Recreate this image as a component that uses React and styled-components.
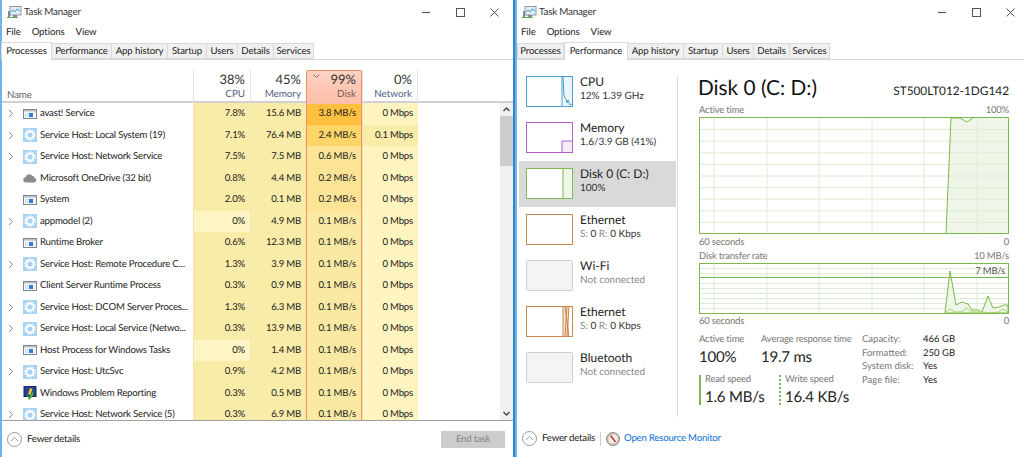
import React from 'react';
import styled, { createGlobalStyle } from 'styled-components';

const GlobalStyle = createGlobalStyle`
  html, body {
    margin: 0;
    padding: 0;
    background: #fff;
  }
  body {
    font-family: 'Lato', 'Noto Sans', sans-serif;
    font-size: 9.6px;
    letter-spacing: -0.2px;
    color: #222;
    overflow: hidden;
    text-rendering: geometricPrecision;
  }
  * {
    box-sizing: border-box;
  }
`;

const Desktop = styled.div`
  display: flex;
  width: 1024px;
  height: 457px;
  overflow: hidden;
`;

const Window = styled.div`
  display: flex;
  flex-direction: column;
  width: ${(p) => p.$width}px;
  height: 457px;
  flex: none;
  background: #fff;
  border-left: 2px solid #6fb4e8;
  border-right: ${(p) => (p.$edge ? '2px solid #2f86c8' : 'none')};
`;

const TitleBar = styled.div`
  display: flex;
  align-items: center;
  height: 24px;
  padding: 0 ${(p) => p.$pad}px 0 5px;
  font-size: 9.8px;
  color: #333;
`;

const TitleText = styled.span`
  margin-left: 2px;
  flex: 1;
`;

const WinButtons = styled.div`
  display: flex;
  align-items: center;
  gap: 25px;
`;

const MenuBar = styled.div`
  display: flex;
  gap: 11px;
  height: 17px;
  padding: 0 0 0 4px;
  align-items: center;
  font-size: 9.6px;
  letter-spacing: -0.1px;
  color: #222;
`;

const TabStrip = styled.div`
  display: flex;
  align-items: flex-end;
  height: 19px;
  border-bottom: 1px solid #d9d9d9;
`;

const Tab = styled.div`
  display: flex;
  align-items: center;
  justify-content: center;
  width: ${(p) => p.$w + (p.$active ? 4 : 0)}px;
  height: ${(p) => (p.$active ? 18 : 16)}px;
  margin-bottom: ${(p) => (p.$active ? -1 : 0)}px;
  position: relative;
  font-size: 9.6px;
  letter-spacing: -0.1px;
  color: #222;
  background: ${(p) => (p.$active ? '#fff' : '#f0f0f0')};
  border: 1px solid #d9d9d9;
  border-bottom: ${(p) => (p.$active ? 'none' : '1px solid #d9d9d9')};
  border-left-width: ${(p) => (p.$active ? 1 : 0)}px;
  &:first-child {
    border-left-width: 1px;
    margin-left: ${(p) => (p.$active ? -1 : 0)}px;
  }
`;

const Body = styled.div`
  flex: 1;
  min-height: 0;
  display: flex;
`;

/* processes table */
const Table = styled.div`
  flex: 1;
  min-width: 0;
  display: flex;
  flex-direction: column;
  padding-top: 10px;
`;

const HeadRow = styled.div`
  display: grid;
  grid-template-columns: 191px 57px 56px 56px 56px 1fr;
  height: 33px;
  flex: none;
  border-bottom: 2px solid #d0d0d0;
`;

const HeadName = styled.div`
  display: flex;
  align-items: flex-end;
  padding: 0 0 3px 5px;
  color: #666;
  font-size: 9.8px;
`;

const HeadCell = styled.div`
  position: relative;
  display: flex;
  flex-direction: column;
  align-items: flex-end;
  justify-content: flex-end;
  padding: 0 5px 3px 0;
  border-left: 1px solid #e4e4e4;
  ${(p) => p.$last && 'border-right: 1px solid #e4e4e4;'}
  ${(p) =>
    p.$hot &&
    `
    background: linear-gradient(#fdd2c2, #fdbfa9);
    border: 1px solid #f58d5f;
    border-bottom: none;
    border-radius: 2px 2px 0 0;
  `}
`;

const HeadPct = styled.div`
  font-size: 13px;
  letter-spacing: 0;
  line-height: 17px;
  color: #333;
`;

const HeadLabel = styled.div`
  font-size: 9.8px;
  letter-spacing: 0;
  line-height: 13px;
  color: ${(p) => (p.$hot ? '#7a5a50' : '#4d6082')};
`;

const SortMark = styled.svg`
  position: absolute;
  left: 6px;
  top: 3px;
`;

const TableBody = styled.div`
  display: flex;
  flex: 1;
  min-height: 0;
`;

const Rows = styled.div`
  flex: 1;
  min-width: 0;
  overflow: hidden;
`;

const Row = styled.div`
  display: grid;
  grid-template-columns: 191px 57px 56px 56px 56px;
  height: 21.5px;
`;

const NameCell = styled.div`
  display: flex;
  align-items: center;
  white-space: nowrap;
  overflow: hidden;
  color: #222;
`;

const Chevron = styled.svg`
  width: 6px;
  height: 9px;
  margin-left: 6px;
  flex: none;
  visibility: ${(p) => (p.$hide ? 'hidden' : 'visible')};
`;

const RowIcon = styled.svg`
  width: 14px;
  height: 14px;
  margin: 0 3px 0 9px;
  flex: none;
`;

const Cell = styled.div`
  display: flex;
  align-items: center;
  justify-content: flex-end;
  padding-right: 5px;
  color: #222;
  background: ${(p) => p.$bg};
  border-left: 1px solid ${(p) => (p.$hot ? '#f58d5f' : '#efe6b4')};
  ${(p) => p.$hot && 'border-right: 1px solid #f58d5f;'}
`;

const Scrollbar = styled.div`
  width: 13px;
  flex: none;
  background: #f0f0f0;
  display: flex;
  flex-direction: column;
  align-items: center;
`;

const ScrollArrow = styled.svg`
  flex: none;
  margin: 4px 0;
`;

const ScrollThumb = styled.div`
  width: 100%;
  height: 50px;
  background: #cdcdcd;
`;

const ScrollGap = styled.div`
  flex: 1;
`;

const Footer = styled.div`
  flex: none;
  height: 37px;
  border-top: ${(p) => (p.$plain ? 'none' : '1px solid #a0a0a0')};
  display: flex;
  align-items: center;
  padding: 0 8px 0 5px;
  color: #222;
`;

const FooterText = styled.span`
  margin-left: 5px;
`;

const FooterSep = styled.span`
  width: 1px;
  height: 14px;
  margin: 0 5px;
  background: #ccc;
`;

const LinkText = styled.a`
  margin-left: 4px;
  color: #0a6fd8;
  text-decoration: none;
`;

const EndTask = styled.div`
  margin-left: auto;
  width: 64px;
  height: 17px;
  display: flex;
  align-items: center;
  justify-content: center;
  background: #cccccc;
  color: #858585;
`;

/* performance page */
const Sidebar = styled.div`
  position: relative;
  width: 161px;
  flex: none;
  padding: 9px 0 0 2px;
  &::after {
    content: '';
    position: absolute;
    top: 16px;
    bottom: 3px;
    right: 0;
    width: 1px;
    background: #dcdcdc;
  }
`;

const Item = styled.div`
  display: flex;
  width: 157px;
  height: 46px;
  padding: 7px 0 0 7px;
  background: ${(p) => (p.$active ? '#d9d9d9' : 'transparent')};
`;

const Thumb = styled.svg`
  width: 47px;
  height: 31px;
  flex: none;
  display: block;
`;

const ItemText = styled.div`
  margin-left: 7px;
  display: flex;
  flex-direction: column;
`;

const ItemName = styled.div`
  font-size: 12px;
  letter-spacing: 0;
  line-height: 16px;
  margin-top: -2px;
  color: #222;
`;

const ItemSub = styled.div`
  font-size: 10px;
  letter-spacing: 0;
  line-height: 12px;
  color: ${(p) => (p.$muted ? '#8a8a8a' : '#333')};
`;

const Dim = styled.span`
  color: #8a8a8a;
`;

const Main = styled.div`
  flex: 1;
  min-width: 0;
  padding: 13px 15px 0 21px;
  display: flex;
  flex-direction: column;
`;

const MainHead = styled.div`
  display: flex;
  justify-content: space-between;
  align-items: baseline;
  height: 31px;
`;

const DiskTitle = styled.div`
  font-size: 20.8px;
  letter-spacing: 0;
  line-height: 30px;
  margin-left: -1px;
  color: #111;
`;

const Model = styled.div`
  font-size: 11.8px;
  letter-spacing: 0;
  color: #222;
`;

const AxisRow = styled.div`
  display: flex;
  justify-content: space-between;
  height: 13px;
  line-height: 13px;
  font-size: 9.5px;
  color: #777;
  margin-top: ${(p) => p.$top || 0}px;
`;

const Chart = styled.svg`
  display: block;
  width: 310px;
  height: ${(p) => p.$h}px;
  flex: none;
`;

const Stats = styled.div`
  display: flex;
  margin-top: 5px;
`;

const StatsLeft = styled.div`
  width: 163px;
  flex: none;
`;

const StatRow = styled.div`
  display: flex;
  margin-bottom: ${(p) => p.$gap || 0}px;
`;

const Stat = styled.div`
  width: ${(p) => p.$w}px;
  flex: none;
  ${(p) => p.$line && `border-left: 2px ${p.$line} #7cbb4a; padding-left: 4px; height: 30px;`}
`;

const StatLabel = styled.div`
  font-size: 9.5px;
  line-height: 13px;
  color: #777;
  white-space: nowrap;
  margin-top: ${(p) => (p.$up ? -2 : 0)}px;
`;

const StatValue = styled.div`
  font-size: 15px;
  line-height: 22px;
  color: #222;
  white-space: nowrap;
`;

const Info = styled.dl`
  display: grid;
  grid-template-columns: 61px auto;
  grid-auto-rows: 13.7px;
  margin: 0;
  font-size: 9.5px;
  letter-spacing: 0;
  line-height: 13.7px;
`;

const InfoKey = styled.dt`
  color: #777;
  white-space: nowrap;
`;

const InfoVal = styled.dd`
  margin: 0;
  color: #222;
`;

const C = {
  pale: '#fff4c4',
  base: '#f9eca8',
  light: '#fef4c0',
  d1: '#ffc040',
  d2: '#ffd568',
  d3: '#fce496',
  d4: '#f9e9a2',
};

const processes = [
  { name: 'avast! Service', icon: 'app', more: true, cpu: '7.8%', mem: '15.6 MB', disk: '3.8 MB/s', net: '0 Mbps', dbg: C.d1 },
  { name: 'Service Host: Local System (19)', icon: 'gear', more: true, cpu: '7.1%', mem: '76.4 MB', disk: '2.4 MB/s', net: '0.1 Mbps', dbg: C.d2, nbg: C.base },
  { name: 'Service Host: Network Service', icon: 'gear', more: true, cpu: '7.5%', mem: '7.5 MB', disk: '0.6 MB/s', net: '0 Mbps', dbg: C.d3 },
  { name: 'Microsoft OneDrive (32 bit)', icon: 'cloud', cpu: '0.8%', mem: '4.4 MB', disk: '0.2 MB/s', net: '0 Mbps', dbg: C.d3 },
  { name: 'System', icon: 'app', cpu: '2.0%', mem: '0.1 MB', disk: '0.2 MB/s', net: '0 Mbps', dbg: C.d3 },
  { name: 'appmodel (2)', icon: 'gear', more: true, cpu: '0%', mem: '4.9 MB', disk: '0.1 MB/s', net: '0 Mbps', cbg: C.pale },
  { name: 'Runtime Broker', icon: 'app', cpu: '0.6%', mem: '12.3 MB', disk: '0.1 MB/s', net: '0 Mbps' },
  { name: 'Service Host: Remote Procedure C...', icon: 'gear', more: true, cpu: '1.3%', mem: '3.9 MB', disk: '0.1 MB/s', net: '0 Mbps' },
  { name: 'Client Server Runtime Process', icon: 'app', cpu: '0.3%', mem: '0.9 MB', disk: '0.1 MB/s', net: '0 Mbps' },
  { name: 'Service Host: DCOM Server Proces...', icon: 'gear', more: true, cpu: '1.3%', mem: '6.3 MB', disk: '0.1 MB/s', net: '0 Mbps' },
  { name: 'Service Host: Local Service (Netwo...', icon: 'gear', more: true, cpu: '0.3%', mem: '13.9 MB', disk: '0.1 MB/s', net: '0 Mbps' },
  { name: 'Host Process for Windows Tasks', icon: 'app', cpu: '0%', mem: '1.4 MB', disk: '0.1 MB/s', net: '0 Mbps', cbg: C.pale },
  { name: 'Service Host: UtcSvc', icon: 'gear', more: true, cpu: '0.9%', mem: '4.2 MB', disk: '0.1 MB/s', net: '0 Mbps' },
  { name: 'Windows Problem Reporting', icon: 'wer', cpu: '0.3%', mem: '0.5 MB', disk: '0.1 MB/s', net: '0 Mbps' },
  { name: 'Service Host: Network Service (5)', icon: 'gear', more: true, cpu: '0.3%', mem: '6.9 MB', disk: '0.1 MB/s', net: '0 Mbps' },
];

const tabs = [
  ['Processes', 47],
  ['Performance', 60],
  ['App history', 56],
  ['Startup', 39],
  ['Users', 31],
  ['Details', 36],
  ['Services', 40],
];

const TaskIcon = () => (
  <svg width="15" height="14" viewBox="0 0 15 14" style={{ flex: 'none' }}>
    <rect x="3" y="1.5" width="11" height="8.5" fill="#dfeef8" stroke="#8a9aa8" />
    <path d="M4 7l2-2 2 2 2-3 3 2" fill="none" stroke="#3f9ad6" />
    <path d="M1 6h2v6H1zM6 10h4v2H6z" fill="#7f8c96" />
    <path d="M0 12.5h11" stroke="#6aa84f" />
  </svg>
);

const ProcessIcon = ({ kind }) => {
  if (kind === 'app') {
    return (
      <RowIcon viewBox="0 0 14 14">
        <rect x="0.5" y="2.5" width="13" height="9" fill="#f4f4f4" stroke="#7d8790" />
        <rect x="1" y="3" width="12" height="1.5" fill="#b9c0c7" />
        <rect x="6" y="6" width="4" height="4" fill="#2f7ed8" />
        <rect x="2" y="6" width="3" height="4" fill="#dfe4e8" />
      </RowIcon>
    );
  }
  if (kind === 'gear') {
    return (
      <RowIcon viewBox="0 0 14 14">
        <rect x="0" y="0" width="14" height="14" fill="#a9d3f2" />
        <circle cx="7" cy="7" r="3.6" fill="none" stroke="#fff" strokeWidth="2" />
        <circle cx="7" cy="7" r="5" fill="none" stroke="#fff" strokeWidth="1.4" strokeDasharray="1.6 1.5" />
      </RowIcon>
    );
  }
  if (kind === 'cloud') {
    return (
      <RowIcon viewBox="0 0 14 14">
        <path d="M3 11.5a2.6 2.6 0 0 1-.3-5.2A3.6 3.6 0 0 1 9.4 5 2.2 2.2 0 0 1 11.6 7 2.3 2.3 0 0 1 11.3 11.5z" fill="#8b8b8b" />
      </RowIcon>
    );
  }
  return (
    <RowIcon viewBox="0 0 14 14">
      <rect x="1" y="0.5" width="12" height="10" fill="#27408f" stroke="#16265e" />
      <path d="M7 2l2.5 1-2 6-2.5-1z" fill="#e9c92e" />
      <path d="M3 7l3 4 5-7-1 6-4 4z" fill="#3fae3a" />
    </RowIcon>
  );
};

const RowChevron = ({ hide }) => (
  <Chevron $hide={hide} viewBox="0 0 6 9">
    <path d="M1 1l3.5 3.5L1 8" fill="none" stroke="#8a8a8a" strokeWidth="1" />
  </Chevron>
);

const CollapseCircle = () => (
  <svg width="15" height="15" viewBox="0 0 15 15" style={{ flex: 'none' }}>
    <circle cx="7.5" cy="7.5" r="7" fill="#fff" stroke="#9a9a9a" />
    <path d="M4 9l3.5-3.5L11 9" fill="none" stroke="#9a9a9a" />
  </svg>
);

const WindowChrome = ({ pad, active }) => (
  <>
    <TitleBar $pad={pad}>
      <TaskIcon />
      <TitleText>Task Manager</TitleText>
      <WinButtons>
        <svg width="9" height="9" viewBox="0 0 9 9"><path d="M0 4.5h8" stroke="#555" strokeWidth="1.2" /></svg>
        <svg width="9" height="9" viewBox="0 0 9 9"><rect x="0.5" y="0.5" width="8" height="8" fill="none" stroke="#555" /></svg>
        <svg width="9" height="9" viewBox="0 0 9 9"><path d="M0.5 0.5l8 8M8.5 0.5l-8 8" stroke="#555" /></svg>
      </WinButtons>
    </TitleBar>
    <MenuBar>
      <span>File</span>
      <span>Options</span>
      <span>View</span>
    </MenuBar>
    <TabStrip>
      {tabs.map(([label, w]) => (
        <Tab key={label} $w={w} $active={label === active}>{label}</Tab>
      ))}
    </TabStrip>
  </>
);

const ProcessesPage = () => (
  <Table>
    <HeadRow>
      <HeadName>Name</HeadName>
      <HeadCell>
        <HeadPct>38%</HeadPct>
        <HeadLabel>CPU</HeadLabel>
      </HeadCell>
      <HeadCell>
        <HeadPct>45%</HeadPct>
        <HeadLabel>Memory</HeadLabel>
      </HeadCell>
      <HeadCell $hot>
        <SortMark width="7" height="4" viewBox="0 0 7 4">
          <path d="M0.5 0.5l3 3 3-3" fill="none" stroke="#8a6a60" />
        </SortMark>
        <HeadPct>99%</HeadPct>
        <HeadLabel $hot>Disk</HeadLabel>
      </HeadCell>
      <HeadCell $last>
        <HeadPct>0%</HeadPct>
        <HeadLabel>Network</HeadLabel>
      </HeadCell>
    </HeadRow>
    <TableBody>
      <Rows>
        {processes.map((p) => (
          <Row key={p.name}>
            <NameCell>
              <RowChevron hide={!p.more} />
              <ProcessIcon kind={p.icon} />
              {p.name}
            </NameCell>
            <Cell $bg={p.cbg || C.base}>{p.cpu}</Cell>
            <Cell $bg={C.base}>{p.mem}</Cell>
            <Cell $bg={p.dbg || C.d4} $hot>{p.disk}</Cell>
            <Cell $bg={p.nbg || C.light}>{p.net}</Cell>
          </Row>
        ))}
      </Rows>
      <Scrollbar>
        <ScrollArrow width="7" height="5" viewBox="0 0 7 5">
          <path d="M0.5 4l3-3 3 3" fill="none" stroke="#444" strokeWidth="1.3" />
        </ScrollArrow>
        <ScrollThumb />
        <ScrollGap />
        <ScrollArrow width="7" height="5" viewBox="0 0 7 5">
          <path d="M0.5 1l3 3 3-3" fill="none" stroke="#444" strokeWidth="1.3" />
        </ScrollArrow>
      </Scrollbar>
    </TableBody>
  </Table>
);

const thumbs = [
  { name: 'CPU', sub: '12%  1.39 GHz', color: '#4a9fd4', fill: '#eef6fb', shape: 'M36 0H47V31H36z', line: 'M36 0V31M37 1l1 19 2 3 1 4 1-3 2 5 2-1' },
  { name: 'Memory', sub: '1.6/3.9 GB (41%)', color: '#b45fd0', fill: '#f4ecf7', shape: 'M36 19H47V31H36z', line: 'M36 31V19H47' },
  { name: 'Disk 0 (C: D:)', sub: '100%', color: '#7fbb4f', fill: '#eff6e9', shape: 'M37 0H47V31H37z', line: 'M37 31V0', active: true },
  { name: 'Ethernet', net: true, color: '#c9864d', fill: '#fff', shape: '', line: '' },
  { name: 'Wi-Fi', sub: 'Not connected', off: true },
  { name: 'Ethernet', net: true, color: '#c9864d', fill: '#f8e3d3', shape: 'M37 0H43V31H37z', line: 'M37 0V31M39 0L43 31M43 0L41 31M41 0L39 31' },
  { name: 'Bluetooth', sub: 'Not connected', off: true },
];

const SideThumb = ({ t }) => (
  <Thumb viewBox="0 0 47 31">
    {t.off ? (
      <rect x="0.5" y="0.5" width="46" height="30" rx="1" fill="#f4f4f4" stroke="#cfcfcf" />
    ) : (
      <>
        <rect x="0" y="0" width="47" height="31" fill="#fff" />
        {t.shape && <path d={t.shape} fill={t.fill} />}
        {t.line && <path d={t.line} fill="none" stroke={t.color} strokeWidth="1" />}
        <rect x="0.5" y="0.5" width="46" height="30" fill="none" stroke={t.color} />
      </>
    )}
  </Thumb>
);

const gridX = [15, 68, 120, 173, 225, 278];

const ActiveChart = () => (
  <Chart $h={117} viewBox="0 0 310 117">
    <rect width="310" height="117" fill="#fff" />
    <path d="M247 116L252 1H261L268 5L274 1H309V116Z" fill="#eff6e9" />
    {Array.from({ length: 9 }, (_, i) => (
      <path key={i} d={`M1 ${12.6 + i * 11.6}H309`} stroke="#deedd1" />
    ))}
    {gridX.map((x) => (
      <path key={x} d={`M${x} 1V116`} stroke="#deedd1" />
    ))}
    <path d="M247 116L252 1H261L268 5L274 1" fill="none" stroke="#7cbb4a" />
    <rect x="0.5" y="0.5" width="309" height="116" fill="none" stroke="#7cbb4a" />
  </Chart>
);

const RateChart = () => (
  <Chart $h={51} viewBox="0 0 310 51">
    <rect width="310" height="51" fill="#fff" />
    {[5, 10, 20, 25, 30, 35, 40, 45].map((y) => (
      <path key={y} d={`M1 ${y + 0.5}H309`} stroke="#deedd1" />
    ))}
    {gridX.map((x) => (
      <path key={x} d={`M${x} 1V50`} stroke="#deedd1" />
    ))}
    <path
      d="M246 50L251 8L257 42L263 39L269 41L273 47L279 47L283 49L289 33L294 45L300 44L305 42L309 42V50Z"
      fill="#eff6e9"
      stroke="#7cbb4a"
    />
    <path d="M246 50L251 46L256 49L262 49L268 45L273 49L283 49L289 50L300 49L304 46L309 49" fill="none" stroke="#a5d36f" />
    <path d="M1 14.5H309" stroke="#7cbb4a" />
    <rect x="0.5" y="0.5" width="309" height="50" fill="none" stroke="#7cbb4a" />
    <text x="306" y="11" textAnchor="end" fontSize="9.5" fill="#555" fontFamily="'Lato', sans-serif">7 MB/s</text>
  </Chart>
);

const PerformancePage = () => (
  <>
    <Sidebar>
      {thumbs.map((t, i) => (
        <Item key={i} $active={t.active}>
          <SideThumb t={t} />
          <ItemText>
            <ItemName>{t.name}</ItemName>
            {t.net ? (
              <ItemSub><Dim>S:</Dim> 0 <Dim>R:</Dim> 0 Kbps</ItemSub>
            ) : (
              <ItemSub $muted={t.off}>{t.sub}</ItemSub>
            )}
          </ItemText>
        </Item>
      ))}
    </Sidebar>
    <Main>
      <MainHead>
        <DiskTitle>Disk 0 (C: D:)</DiskTitle>
        <Model>ST500LT012-1DG142</Model>
      </MainHead>
      <AxisRow $top={0}><span>Active time</span><span>100%</span></AxisRow>
      <ActiveChart />
      <AxisRow $top={2}><span>60 seconds</span><span>0</span></AxisRow>
      <AxisRow $top={1}><span>Disk transfer rate</span><span>10 MB/s</span></AxisRow>
      <RateChart />
      <AxisRow $top={1}><span>60 seconds</span><span>0</span></AxisRow>
      <Stats>
        <StatsLeft>
          <StatRow $gap={7}>
            <Stat $w={62}>
              <StatLabel>Active time</StatLabel>
              <StatValue>100%</StatValue>
            </Stat>
            <Stat $w={100}>
              <StatLabel>Average response time</StatLabel>
              <StatValue>19.7 ms</StatValue>
            </Stat>
          </StatRow>
          <StatRow>
            <Stat $w={80} $line="solid">
              <StatLabel $up>Read speed</StatLabel>
              <StatValue>1.6 MB/s</StatValue>
            </Stat>
            <Stat $w={80} $line="dotted">
              <StatLabel $up>Write speed</StatLabel>
              <StatValue>16.4 KB/s</StatValue>
            </Stat>
          </StatRow>
        </StatsLeft>
        <Info>
          <InfoKey>Capacity:</InfoKey><InfoVal>466 GB</InfoVal>
          <InfoKey>Formatted:</InfoKey><InfoVal>250 GB</InfoVal>
          <InfoKey>System disk:</InfoKey><InfoVal>Yes</InfoVal>
          <InfoKey>Page file:</InfoKey><InfoVal>Yes</InfoVal>
        </Info>
      </Stats>
    </Main>
  </>
);

const App = () => (
  <Desktop>
    <GlobalStyle />
    <Window $width={515} $edge>
      <WindowChrome pad={14} active="Processes" />
      <Body>
        <ProcessesPage />
      </Body>
      <Footer>
        <CollapseCircle />
        <FooterText>Fewer details</FooterText>
        <EndTask>End task</EndTask>
      </Footer>
    </Window>
    <Window $width={509}>
      <WindowChrome pad={9} active="Performance" />
      <Body>
        <PerformancePage />
      </Body>
      <Footer $plain>
        <CollapseCircle />
        <FooterText>Fewer details</FooterText>
        <FooterSep />
        <svg width="14" height="14" viewBox="0 0 14 14" style={{ flex: 'none' }}>
          <circle cx="7" cy="7" r="6.5" fill="#c9c4b8" stroke="#8d8a80" />
          <circle cx="7" cy="7" r="4.5" fill="#f4f1ea" />
          <path d="M4.5 3.5L9.5 10" stroke="#c8322a" strokeWidth="1.6" />
        </svg>
        <LinkText>Open Resource Monitor</LinkText>
      </Footer>
    </Window>
  </Desktop>
);

export default App;
